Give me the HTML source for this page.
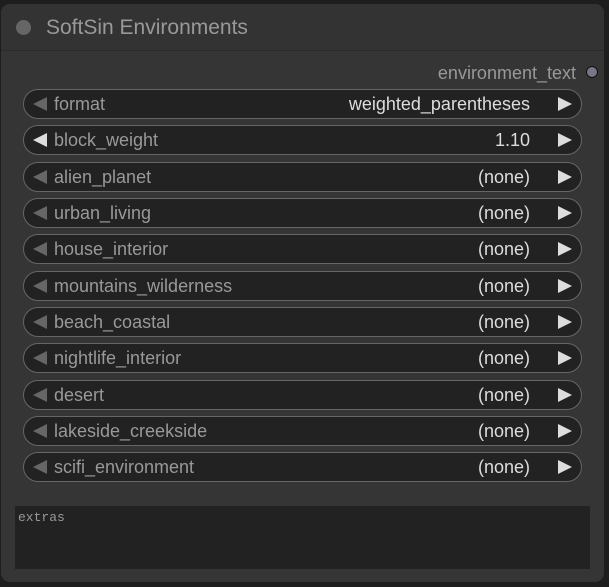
<!DOCTYPE html>
<html><head><style>
body{margin:0;width:609px;height:587px;background:#1e1e1e;position:relative;overflow:hidden;font-family:"Liberation Sans",sans-serif;}
.node{position:absolute;left:1px;top:4px;width:603px;height:578px;background:#353535;border-radius:9px;overflow:hidden;}
.title{position:absolute;left:0;top:0;width:100%;height:46px;background:#333;border-bottom:1px solid #2a2a2a;}
.dot{position:absolute;left:15px;top:16px;width:15px;height:15px;border-radius:50%;background:#666;}
.tt{position:absolute;left:45px;top:12px;font-size:21px;color:#999;}
.out{position:absolute;right:28px;top:59px;font-size:18px;color:#999;}
.odot{position:absolute;left:585px;top:62px;width:10px;height:10px;border-radius:50%;background:#778;border:1px solid #111;}
.w{position:absolute;left:22px;width:557px;height:28px;border:1px solid #666;border-radius:15px;background:#222;font-size:18px;}
.w .l{position:absolute;left:30px;top:4px;color:#999;}
.w .v{position:absolute;right:51px;top:4px;color:#ddd;}
.al{position:absolute;left:9px;top:7px;width:0;height:0;border-top:7px solid transparent;border-bottom:7px solid transparent;border-right:14px solid #666;}
.ar{position:absolute;right:9px;top:7px;width:0;height:0;border-top:7px solid transparent;border-bottom:7px solid transparent;border-left:14px solid #ddd;}
.ta{position:absolute;left:14px;top:502px;width:575px;height:63px;background:#222;font-family:"Liberation Mono",monospace;font-size:13px;color:#999;}
.ta span{position:absolute;left:3px;top:4px;}
</style></head><body>
<div class="node">
<div class="title"><div class="dot"></div><div class="tt">SoftSin Environments</div></div>
<div class="out">environment_text</div>
<div class="odot"></div>
<div class="w" style="top:85px"><div class="al"></div><span class="l">format</span><span class="v">weighted_parentheses</span><div class="ar"></div></div>
<div class="w" style="top:121px"><div class="al" style="border-right-color:#ddd"></div><span class="l">block_weight</span><span class="v">1.10</span><div class="ar"></div></div>
<div class="w" style="top:158px"><div class="al"></div><span class="l">alien_planet</span><span class="v">(none)</span><div class="ar"></div></div>
<div class="w" style="top:194px"><div class="al"></div><span class="l">urban_living</span><span class="v">(none)</span><div class="ar"></div></div>
<div class="w" style="top:230px"><div class="al"></div><span class="l">house_interior</span><span class="v">(none)</span><div class="ar"></div></div>
<div class="w" style="top:267px"><div class="al"></div><span class="l">mountains_wilderness</span><span class="v">(none)</span><div class="ar"></div></div>
<div class="w" style="top:303px"><div class="al"></div><span class="l">beach_coastal</span><span class="v">(none)</span><div class="ar"></div></div>
<div class="w" style="top:339px"><div class="al"></div><span class="l">nightlife_interior</span><span class="v">(none)</span><div class="ar"></div></div>
<div class="w" style="top:376px"><div class="al"></div><span class="l">desert</span><span class="v">(none)</span><div class="ar"></div></div>
<div class="w" style="top:412px"><div class="al"></div><span class="l">lakeside_creekside</span><span class="v">(none)</span><div class="ar"></div></div>
<div class="w" style="top:448px"><div class="al"></div><span class="l">scifi_environment</span><span class="v">(none)</span><div class="ar"></div></div>
<div class="ta"><span>extras</span></div>
</div>
</body></html>
